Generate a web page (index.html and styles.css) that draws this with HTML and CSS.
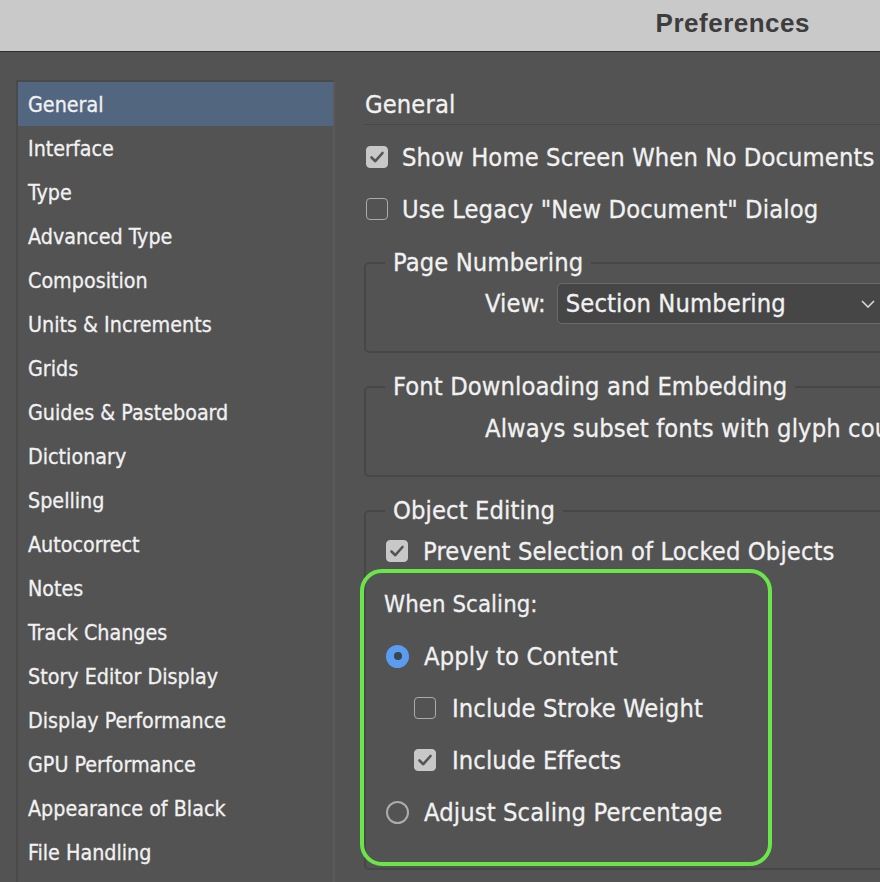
FILE: index.html
```html
<!DOCTYPE html>
<html lang="en">
<head>
<meta charset="utf-8">
<title>Preferences</title>
<link rel="stylesheet" href="styles.css">
</head>
<body>
<header class="titlebar"><span class="title">Preferences</span></header>
<div class="window">
  <nav class="sidebar">
    <ul class="nav-list">
      <li class="nav-item selected">General</li>
      <li class="nav-item">Interface</li>
      <li class="nav-item">Type</li>
      <li class="nav-item">Advanced Type</li>
      <li class="nav-item">Composition</li>
      <li class="nav-item">Units &amp; Increments</li>
      <li class="nav-item">Grids</li>
      <li class="nav-item">Guides &amp; Pasteboard</li>
      <li class="nav-item">Dictionary</li>
      <li class="nav-item">Spelling</li>
      <li class="nav-item">Autocorrect</li>
      <li class="nav-item">Notes</li>
      <li class="nav-item">Track Changes</li>
      <li class="nav-item">Story Editor Display</li>
      <li class="nav-item">Display Performance</li>
      <li class="nav-item">GPU Performance</li>
      <li class="nav-item">Appearance of Black</li>
      <li class="nav-item">File Handling</li>
    </ul>
  </nav>
  <main class="panel">
    <h2 class="panel-title">General</h2>
    <div class="row top-row">
      <span class="checkbox checked"><svg viewBox="0 0 22 22"><path d="M5.5 11.5 L9.3 15.2 L16.5 7"/></svg></span>
      <span class="label">Show Home Screen When No Documents Are Open</span>
    </div>
    <div class="row top-row">
      <span class="checkbox"></span>
      <span class="label">Use Legacy "New Document" Dialog</span>
    </div>

    <fieldset class="group">
      <legend>Page Numbering</legend>
      <div class="select-row">
        <span class="label">View:</span>
        <div class="select">
          <span>Section Numbering</span>
          <svg class="chevron" viewBox="0 0 14 8"><path d="M1 1 L7 7 L13 1"/></svg>
        </div>
      </div>
    </fieldset>

    <fieldset class="group">
      <legend>Font Downloading and Embedding</legend>
      <div class="text-row">Always subset fonts with glyph counts greater than:</div>
    </fieldset>

    <fieldset class="group last">
      <legend>Object Editing</legend>
      <div class="row obj-row">
        <span class="checkbox checked"><svg viewBox="0 0 22 22"><path d="M5.5 11.5 L9.3 15.2 L16.5 7"/></svg></span>
        <span class="label">Prevent Selection of Locked Objects</span>
      </div>
      <div class="highlight">
        <div class="hl-row caption">When Scaling:</div>
        <div class="hl-row opt">
          <span class="radio on"></span>
          <span class="label">Apply to Content</span>
        </div>
        <div class="hl-row sub">
          <span class="checkbox"></span>
          <span class="label">Include Stroke Weight</span>
        </div>
        <div class="hl-row sub">
          <span class="checkbox checked"><svg viewBox="0 0 22 22"><path d="M5.5 11.5 L9.3 15.2 L16.5 7"/></svg></span>
          <span class="label">Include Effects</span>
        </div>
        <div class="hl-row opt">
          <span class="radio"></span>
          <span class="label">Adjust Scaling Percentage</span>
        </div>
      </div>
    </fieldset>
  </main>
</div>
</body>
</html>
```
FILE: styles.css
```css
html, body {
  margin: 0;
  padding: 0;
}
body {
  width: 880px;
  height: 882px;
  overflow: hidden;
  background: #535353;
  color: #f1f1f1;
  font-family: "DejaVu Sans Condensed", "DejaVu Sans", sans-serif;
  font-stretch: condensed;
  -webkit-text-stroke: 0.3px currentColor;
}
.titlebar {
  height: 51px;
  background: #c9c9c9;
  border-bottom: 1px solid #2f2f2f;
  display: flex;
  align-items: center;
  justify-content: flex-end;
  padding-right: 70px;
  box-sizing: content-box;
}
.title {
  font-family: "Liberation Sans", Arial, sans-serif;
  font-stretch: normal;
  font-weight: bold;
  font-size: 26px;
  letter-spacing: 0.5px;
  color: #3d3d3d;
  padding-bottom: 5px;
  -webkit-text-stroke: 0;
}
.window {
  display: flex;
  gap: 29px;
  padding: 28px 0 0 16px;
  height: 802px;
}
.sidebar {
  width: 315px;
  flex: none;
  border: 2px solid #4a4a4a;
  border-right-color: #5a5a5a;
  border-bottom: none;
}
.nav-list {
  list-style: none;
  margin: 0;
  padding: 0;
}
.nav-item {
  height: 44px;
  line-height: 46px;
  padding-left: 10px;
  font-size: 21.3px;
  white-space: nowrap;
}
.nav-item.selected {
  background: #536680;
}
.panel {
  width: 560px;
  flex: none;
  font-size: 25.3px;
  letter-spacing: 0.1px;
}
.panel-title {
  margin: 2px 0 0;
  height: 42px;
  line-height: 45px;
  padding-left: 1px;
  font-size: 25.3px;
  font-weight: normal;
  border-bottom: 1px solid #484848;
}
.row {
  display: flex;
  align-items: center;
  height: 40px;
  gap: 14px;
  white-space: nowrap;
}
.top-row {
  margin-top: 12px;
  padding-left: 2px;
}
.checkbox {
  width: 22px;
  height: 22px;
  box-sizing: border-box;
  border: 1.5px solid #ababab;
  border-radius: 4px;
  flex: none;
  display: flex;
}
.checkbox.checked {
  background: #c8c8c8;
  border-color: #c8c8c8;
}
.checkbox svg {
  width: 22px;
  height: 22px;
  margin: -1.5px;
}
.checkbox svg path {
  fill: none;
  stroke: #555555;
  stroke-width: 2.6;
  stroke-linecap: round;
  stroke-linejoin: round;
}
.group {
  margin: 20px 0 0;
  padding: 0;
  border: 2px solid #474747;
  border-radius: 5px;
  min-width: 0;
}
.group legend {
  margin-left: 19px;
  padding: 0 8px;
  line-height: 28px;
  white-space: nowrap;
}
.select-row {
  display: flex;
  align-items: center;
  gap: 11px;
  padding: 6px 0 27px 119px;
}
.select {
  width: 330px;
  height: 41px;
  box-sizing: border-box;
  background: #464646;
  border: 1.5px solid #6a6a6a;
  border-radius: 5px;
  display: flex;
  align-items: center;
  justify-content: space-between;
  padding: 0 11px 0 8px;
  white-space: nowrap;
}
.chevron {
  width: 14px;
  height: 8px;
}
.chevron path {
  fill: none;
  stroke: #d8d8d8;
  stroke-width: 1.6;
}
.text-row {
  padding: 8px 0 26px 119px;
  line-height: 40px;
  white-space: nowrap;
}
.group.last {
  padding-bottom: 2px;
}
.obj-row {
  margin-top: 6px;
  padding-left: 20px;
  gap: 15px;
}
.highlight {
  margin: -2px 0 0 -6px;
  width: 412px;
  box-sizing: border-box;
  border: 4px solid #6be64a;
  border-radius: 22px;
  padding: 5px 0 24px 20px;
}
.hl-row {
  height: 52px;
  display: flex;
  align-items: center;
  gap: 15px;
  white-space: nowrap;
}
.caption {
  font-size: 23.7px;
}
.opt {
  padding-left: 2px;
}
.sub {
  padding-left: 30px;
  gap: 16px;
}
.radio {
  width: 23px;
  height: 23px;
  box-sizing: border-box;
  border-radius: 50%;
  border: 2px solid #acacac;
  flex: none;
  display: flex;
  align-items: center;
  justify-content: center;
}
.radio.on {
  background: #5a9cf0;
  border-color: #5a9cf0;
}
.radio.on::after {
  content: "";
  width: 8px;
  height: 8px;
  border-radius: 50%;
  background: #3b434d;
}
```
